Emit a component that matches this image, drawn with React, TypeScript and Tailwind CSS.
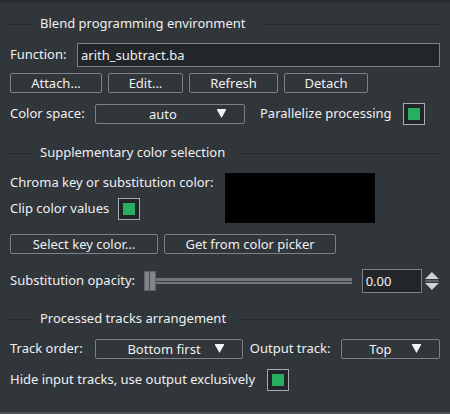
import React from "react";

const font = { fontFamily: '"Noto Sans", "DejaVu Sans", sans-serif' };

function SectionTitle({ title }: { title: string }) {
  return (
    <div className="flex items-center h-[20px]">
      <div className="w-[20px] h-px bg-[#24282b]" />
      <span className="ml-[10px] mr-[16px] whitespace-nowrap">{title}</span>
      <div className="flex-1 h-px bg-[#24282b]" />
    </div>
  );
}

function Button({ label, w }: { label: string; w: string }) {
  return (
    <div
      className={`${w} h-[20px] flex items-center justify-center border border-[#7b8185] rounded-[2px] leading-none`}
    >
      {label}
    </div>
  );
}

function Check() {
  return (
    <div className="w-[22px] h-[22px] border border-[#a6abaf] bg-[#232629] flex items-center justify-center">
      <div className="w-[12px] h-[12px] bg-[#27ae60]" />
    </div>
  );
}

function Combo({ value, w, pad }: { value: string; w: string; pad: string }) {
  return (
    <div
      className={`${w} h-[20px] border border-[#7b8185] rounded-[2px] flex items-center leading-none relative`}
    >
      <span className={`flex-1 text-center ${pad}`}>{value}</span>
      <svg width="9" height="9" viewBox="0 0 9 9" className="absolute right-[18px] top-[4px]">
        <path d="M0 0 H9 V1 L4.5 9 L0 1 Z" fill="#f4f4f4" />
      </svg>
    </div>
  );
}

export default function App() {
  return (
    <div
      className="w-[450px] h-[414px] bg-[#31363b] text-[#eff0f1] text-[13px] flex flex-col overflow-hidden"
      style={font}
    >
      <div className="h-[3px] bg-[#2a2e32]" />
      <div className="flex-1 flex flex-col px-[10px]">
        <div className="mt-[11px]">
          <SectionTitle title="Blend programming environment" />
        </div>

        <div className="mt-[9px] flex items-center h-[24px]">
          <span className="w-[67px]">Function:</span>
          <div className="flex-1 h-[24px] border border-[#7b8185] bg-[#232629] flex items-center px-[3px] leading-none">
            arith_subtract.ba
          </div>
        </div>

        <div className="mt-[6px] flex gap-[6px]">
          <Button label="Attach..." w="w-[92px]" />
          <Button label="Edit..." w="w-[75px]" />
          <Button label="Refresh" w="w-[89px]" />
          <Button label="Detach" w="w-[84px]" />
        </div>

        <div className="mt-[10px] flex items-center h-[22px]">
          <span className="w-[85px]">Color space:</span>
          <Combo value="auto" w="w-[150px]" pad="pr-[14px]" />
          <span className="ml-[15px]">Parallelize processing</span>
          <div className="ml-[11px]">
            <Check />
          </div>
        </div>

        <div className="mt-[18px]">
          <SectionTitle title="Supplementary color selection" />
        </div>

        <div className="mt-[10px] flex">
          <div className="w-[215px] flex flex-col">
            <div className="h-[20px] flex items-center">Chroma key or substitution color:</div>
            <div className="mt-[5px] h-[22px] flex items-center">
              <span className="w-[108px]">Clip color values</span>
              <Check />
            </div>
          </div>
          <div className="w-[150px] h-[50px] bg-black" />
        </div>

        <div className="mt-[11px] flex gap-[6px]">
          <Button label="Select key color..." w="w-[148px]" />
          <Button label="Get from color picker" w="w-[172px]" />
        </div>

        <div className="mt-[15px] flex items-center h-[24px]">
          <span className="w-[135px]">Substitution opacity:</span>
          <div className="w-[210px] h-[20px] flex items-center">
            <div className="w-[12px] h-[20px] bg-[#7f8688] border border-[#5d6366] flex justify-center">
              <div className="w-px h-full bg-[#4a5054]" />
            </div>
            <div className="flex-1 h-[6px] bg-[#6f7779] flex items-center">
              <div className="w-full h-px bg-[#3a3f43]" />
            </div>
          </div>
          <div className="ml-[10px] w-[61px] h-[24px] border border-[#7b8185] bg-[#232629] flex items-center px-[3px] leading-none">
            0.00
          </div>
          <svg width="16" height="24" viewBox="0 0 16 24" className="ml-[2px]">
            <path d="M1 10 L8 3 L15 10 Z" fill="#d0d3d5" />
            <rect x="1" y="11.5" width="14" height="1" fill="#8a9093" />
            <path d="M1 14 L15 14 L8 21 Z" fill="#d0d3d5" />
          </svg>
        </div>

        <div className="mt-[16px]">
          <SectionTitle title="Processed tracks arrangement" />
        </div>

        <div className="mt-[10px] flex items-center h-[20px]">
          <span className="w-[86px]">Track order:</span>
          <Combo value="Bottom first" w="w-[149px]" pad="pr-[10px]" />
          <span className="ml-[7px] w-[92px]">Output track:</span>
          <Combo value="Top" w="w-[100px]" pad="pr-[20px]" />
        </div>

        <div className="mt-[10px] flex items-center h-[22px]">
          <span className="w-[257px]">Hide input tracks, use output exclusively</span>
          <Check />
        </div>
      </div>
      <div className="h-[2px] bg-[#4d5257]" />
    </div>
  );
}
